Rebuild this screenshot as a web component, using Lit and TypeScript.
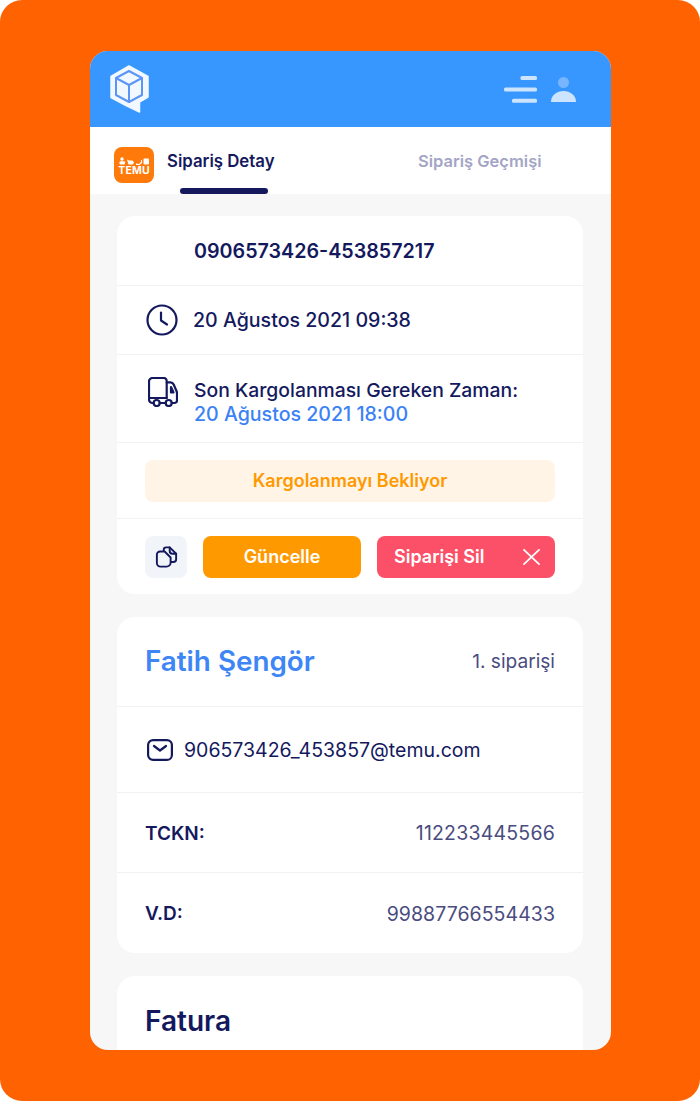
import { LitElement, html, css } from "lit";
import { customElement } from "lit/decorators.js";

@customElement("app-root")
export class AppRoot extends LitElement {
  static styles = css`
    :host { display: block; width: 700px; height: 1101px; background: #fff; font-family: Inter, "Noto Sans", sans-serif; color: #14195e; overflow: hidden; }
    * { box-sizing: border-box; }
    .frame { width: 700px; height: 1101px; background: #ff6200; border-radius: 22px; padding: 51px 89px 51px 90px; }
    .phone { height: 999px; border-radius: 18px; overflow: hidden; background: #f7f7f7; }
    .head { height: 76px; background: #3797ff; display: flex; align-items: center; justify-content: space-between; padding: 0 35px 0 20px; }
    .head-right { display: flex; align-items: center; gap: 14px; }
    .tabs { height: 67px; background: #fff; display: flex; position: relative; padding: 20px 0 0 24px; }
    .temu { width: 40px; height: 36px; border-radius: 8px; background: #ff7a0a; color: #fff; display: flex; flex-direction: column; align-items: center; padding-top: 10px; }
    .temu b { font-size: 10.5px; line-height: 9px; font-weight: 700; letter-spacing: .2px; }
    .temu svg { display: block; margin-bottom: 1px; }
    .tab { font-size: 16.8px; font-weight: 600; line-height: 20px; margin-top: 4px; }
    .tab.one { margin-left: 13px; width: 251px; }
    .tab.two { color: #a4a5c6; font-size: 16.5px; }
    .ind { position: absolute; left: 90px; bottom: 0; width: 88px; height: 6px; background: #14195e; border-radius: 3px; }
    .body { padding: 22px 28px 0 27px; display: flex; flex-direction: column; gap: 23px; }
    .card { background: #fff; border-radius: 18px; }
    .row { display: flex; align-items: center; padding: 0 28px; border-bottom: 1px solid #f2f2f2; font-size: 19.6px; line-height: 24px; font-weight: 500; }
    .row:last-child { border-bottom: 0; }
    .r1 { height: 70px; padding-left: 77px; font-size: 19.7px; font-weight: 600; }
    .r2 { height: 69px; gap: 15px; padding-left: 29px; }
    .r3 { height: 88px; gap: 16px; align-items: flex-start; padding-top: 23px; padding-left: 31px; }
    .r3 .l1 { font-size: 19.35px; }
    .blue { color: #3b82f6; }
    .r4 { height: 76px; }
    .status { flex: 1; height: 42px; border-radius: 8px; background: #fff4e6; color: #ff9900; display: flex; align-items: center; justify-content: center; font-size: 18px; font-weight: 600; }
    .r5 { height: 75px; gap: 16px; }
    .copy { width: 42px; height: 42px; border-radius: 8px; background: #f1f5fa; display: flex; align-items: center; justify-content: center; }
    .btn { height: 42px; border-radius: 8px; color: #fff; font-size: 18px; font-weight: 600; display: flex; align-items: center; }
    .update { width: 158px; background: #ff9900; justify-content: center; }
    .del { width: 178px; background: #fb5067; justify-content: space-between; padding: 0 15px 0 17px; }
    .name { height: 90px; justify-content: space-between; padding-bottom: 2px; }
    .name strong { font-size: 27.8px; font-weight: 600; color: #3e86f5; }
    .name span { font-size: 19.1px; font-weight: 400; color: #4a4c80; }
    .mail { height: 86px; gap: 11px; font-weight: 400; padding-left: 30px; font-size: 19.5px; }
    .kv { height: 80px; justify-content: space-between; padding-top: 1px; }
    .kv b { font-size: 19px; font-weight: 600; padding-top: 1px; }
    .kv span { font-size: 19.5px; font-weight: 400; color: #4a4c80; letter-spacing: .2px; }
    .kv span.tight { letter-spacing: .05px; }
    .title { padding: 28px 28px 0; height: 120px; font-size: 28px; font-weight: 600; line-height: 34px; }
  `;

  render() {
    return html`
      <div class="frame"><div class="phone">
        <div class="head">
          <svg width="39" height="48" viewBox="0 0 39 48">
            <path d="M19 1 38 11.500V32L29.500 37V47L16 40.500 1 32.500V11.500Z" fill="#f2f8ff" stroke="#f2f8ff" stroke-width="1.500" stroke-linejoin="round"/>
            <path d="M19 6 32 13V30L19 37 6 30V13ZM6 13 19 20 32 13M19 20V37" fill="none" stroke="#5a95f7" stroke-width="2" stroke-linejoin="round"/>
          </svg>
          <div class="head-right">
            <svg width="33" height="27" viewBox="0 0 33 27" fill="#cde4ff">
              <rect x="16.500" y="0" width="16.500" height="4" rx="1.500"/><rect x="0" y="11.500" width="33" height="4" rx="1.500"/><rect x="8" y="22.800" width="25" height="4" rx="1.500"/>
            </svg>
            <svg width="25" height="25" viewBox="0 0 25 25">
              <circle cx="12.500" cy="5.500" r="5.500" fill="#77b5ff"/><path d="M0 25C0 18 6 14 12.500 14S25 18 25 25Z" fill="#cde4ff"/>
            </svg>
          </div>
        </div>
        <div class="tabs">
          <div class="temu">
            <svg width="30" height="8" viewBox="0 0 30 8" fill="#fff">
              <circle cx="3" cy="2" r="1.700"/><rect x=".5" y="4.200" width="5.500" height="3.300" rx="1"/>
              <path d="M8 2.500l2 1h3.500l1.500 2-1 2H9.500z"/><path d="M17 6.500l3 .5 2-2V3h1v3l-2.500 2H17z"/>
              <rect x="24.500" y="1.500" width="5.500" height="6" rx="1"/>
            </svg>
            <b>TEMU</b>
          </div>
          <div class="tab one">Sipariş Detay</div>
          <div class="tab two">Sipariş Geçmişi</div>
          <div class="ind"></div>
        </div>
        <div class="body">
          <div class="card">
            <div class="row r1">0906573426-453857217</div>
            <div class="row r2">
              <svg width="32" height="32" viewBox="0 0 32 32" fill="none" stroke="#14195e" stroke-width="2.200" stroke-linecap="round" stroke-linejoin="round"><circle cx="16" cy="16" r="14.500"/><path d="M15 8.500V16.500L21 20.500"/></svg>
              <span>20 Ağustos 2021 09:38</span>
            </div>
            <div class="row r3">
              <svg width="30" height="30" viewBox="0 0 30 30" fill="none" stroke="#14195e" stroke-width="2.200" stroke-linecap="round" stroke-linejoin="round" style="flex:none;margin-top:-1px"><path d="M5.700 26H4.500A3.500 3.500 0 0 1 1 22.500V4.500A3.500 3.500 0 0 1 4.500 1H15.500A3 3 0 0 1 18.700 4V21"/><path d="M1 21H18.700"/><path d="M18.700 5.300H22.500C24 5.300 25 6 25.700 7.500L28.500 14C28.800 14.800 29 15.500 29 16.500V23.500A2.500 2.500 0 0 1 26.500 26H23.700"/><path d="M23 10 25.500 15.500H23Z"/><circle cx="8.700" cy="26" r="3"/><circle cx="20.700" cy="26" r="3"/><path d="M11.700 26H17.700"/></svg>
              <div><span class="l1">Son Kargolanması Gereken Zaman:</span><br/><span class="blue">20 Ağustos 2021 18:00</span></div>
            </div>
            <div class="row r4"><div class="status">Kargolanmayı Bekliyor</div></div>
            <div class="row r5">
              <div class="copy">
                <svg width="23" height="22" viewBox="0 0 24 24" fill="none" stroke="#14195e" stroke-width="2.100" stroke-linecap="round" stroke-linejoin="round"><path d="M9 5V4A2.500 2.500 0 0 1 11.500 1.500H15.500L22.500 8.500V14.500A3 3 0 0 1 19.500 17.500H17"/><path d="M15.500 1.500V5.500A3 3 0 0 0 18.500 8.500H22.500"/><path d="M5 6H10L16.500 12.500V18A4.500 4.500 0 0 1 12 22.500H5.500A4 4 0 0 1 1.500 18.500V9.500A3.500 3.500 0 0 1 5 6Z"/></svg>
              </div>
              <div class="btn update">Güncelle</div>
              <div class="btn del">Siparişi Sil
                <svg width="17" height="16" viewBox="0 0 17 16" stroke="#fff" stroke-width="1.800" stroke-linecap="round"><path d="M1 .9 16 15.100M16 .9 1 15.100"/></svg>
              </div>
            </div>
          </div>
          <div class="card">
            <div class="row name"><strong>Fatih Şengör</strong><span>1. siparişi</span></div>
            <div class="row mail">
              <svg width="26" height="22" viewBox="0 0 26 22" fill="none" stroke="#14195e" stroke-width="2.200" stroke-linecap="round" stroke-linejoin="round"><rect x="1.100" y="1.100" width="23.800" height="19.800" rx="5"/><path d="M7 7 13 11.500 19 7"/></svg>
              <span>906573426_453857@temu.com</span>
            </div>
            <div class="row kv"><b>TCKN:</b><span>112233445566</span></div>
            <div class="row kv"><b>V.D:</b><span class="tight">99887766554433</span></div>
          </div>
          <div class="card"><div class="title">Fatura</div></div>
        </div>
      </div></div>
    `;
  }
}
